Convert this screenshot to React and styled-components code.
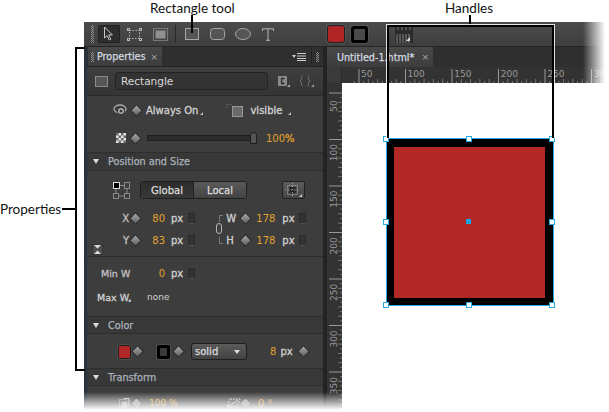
import React from 'react';
import styled, {createGlobalStyle} from 'styled-components';

const Global = createGlobalStyle`
html,body{margin:0;padding:0;background:#fff;}
*{box-sizing:border-box;}
`;

const UI = `"DejaVu Sans", sans-serif`;
const ORANGE = '#e3a22f';

const Page = styled.div`
position:relative;
width:609px;
height:412px;
overflow:hidden;
background:#fff;
padding:22px 0 0 84px;
`;

const Callout = styled.div`
position:absolute;
left:${p => p.$x}px;
top:${p => p.$y}px;
font:13.5px/16px "Lato", sans-serif;
color:#111;
white-space:nowrap;
z-index:5;
`;
const Leader = styled.div`
position:absolute;
left:${p => p.$x}px;
top:${p => p.$y}px;
width:${p => p.$w}px;
height:${p => p.$h}px;
background:#000;
z-index:5;
`;
const Bracket = styled.div`
position:absolute;
left:75px;
top:47px;
width:10px;
height:324px;
border:2px solid #000;
border-right:none;
z-index:5;
`;
const HandleFrame = styled.div`
position:absolute;
left:387px;
top:25px;
width:167px;
height:113px;
border:2px solid #000;
border-bottom:none;
outline:1px solid rgba(255,255,255,.85);
clip-path:inset(-1px -1px 0 -1px);
z-index:5;
`;

const Window = styled.div`
width:525px;
height:390px;
background:#3c3c3c;
display:flex;
flex-direction:column;
overflow:hidden;
font-family:${UI};
`;
const Toolbar = styled.div`
height:25px;
flex:none;
display:flex;
align-items:center;
padding-left:7px;
background:linear-gradient(#4b4b4b,#3f3f3f);
border-bottom:1px solid #252525;
`;
const Grip = styled.div`
width:${p => p.$w || 3}px;
height:${p => p.$h || 18}px;
margin-left:${p => p.$ml || 0}px;
margin-right:${p => p.$mr || 0}px;
flex:none;
background:repeating-conic-gradient(#8f8f8f 0 25%,transparent 0 50%) 0 0/2px 2px;
`;
const ToolButton = styled.div`
width:${p => p.$w}px;
height:${p => p.$h || 18}px;
margin-left:${p => p.$ml}px;
flex:none;
display:flex;
align-items:center;
justify-content:center;
border-radius:2px;
background:${p => (p.$active ? '#2d2d2d' : 'transparent')};
box-shadow:${p => (p.$active ? 'inset 0 0 0 1px #222' : 'none')};
`;
const ToolDivider = styled.div`
width:1px;
height:18px;
margin-left:${p => p.$ml}px;
background:#272727;
flex:none;
`;
const ColorChip = styled.div`
width:${p => p.$size}px;
height:${p => p.$size}px;
margin-left:${p => p.$ml}px;
flex:none;
border-radius:3px;
background:${p => (p.$stroke ? '#4a4a4a' : '#b12727')};
border:${p => (p.$stroke ? `${p.$stroke}px solid #000` : '1px solid #1f1f1f')};
box-shadow:0 0 0 1px rgba(255,255,255,.08);
`;

const Body = styled.div`
flex:1;
min-height:0;
display:flex;
`;
const Rail = styled.div`
width:3px;
flex:none;
background:#2a3240;
`;
const Panel = styled.div`
width:236px;
flex:none;
display:flex;
flex-direction:column;
background:#3d3d3d;
`;
const Sash = styled.div`
width:4px;
flex:none;
background:#232323;
`;
const TabBar = styled.div`
height:20px;
flex:none;
display:flex;
align-items:stretch;
background:#2f2f2f;
border-bottom:1px solid #242424;
`;
const PanelTab = styled.div`
display:flex;
align-items:center;
flex:none;
width:${p => p.$w}px;
margin-left:${p => p.$ml || 0}px;
padding-left:${p => p.$pl}px;
font-size:9.6px;
color:#d3dae0;
-webkit-text-stroke:.25px;
background:linear-gradient(#484848,#3d3d3d);
white-space:nowrap;
`;
const TabClose = styled.span`
margin-left:auto;
margin-right:4px;
font-size:9px;
color:#aaa;
-webkit-text-stroke:0;
`;
const MenuSpot = styled.div`
margin-left:auto;
display:flex;
align-items:center;
`;
const MenuSplit = styled.div`
width:1px;
height:100%;
margin:0 4px 0 5px;
background:#242424;
`;
const NameRow = styled.div`
height:29px;
flex:none;
display:flex;
align-items:center;
padding-left:8px;
background:linear-gradient(#3f3f3f,#343434);
border-bottom:1px solid #2a2a2a;
`;
const Swatch = styled.div`
width:13px;
height:11px;
flex:none;
background:#575757;
border:1px solid #8a8a8a;
`;
const NameField = styled.div`
width:153px;
height:18px;
margin-left:7px;
flex:none;
display:flex;
align-items:center;
padding-left:5px;
border:1px solid #222;
border-radius:3px;
background:#333;
color:#d8d8d8;
font-size:10.5px;
`;
const Row = styled.div`
height:${p => p.$h}px;
flex:none;
display:flex;
align-items:center;
padding-top:${p => p.$pt || 0}px;
padding-left:${p => p.$pl || 0}px;
position:relative;
border-bottom:${p => (p.$line ? '1px solid #2e2e2e' : 'none')};
`;
const Section = styled.div`
height:${p => p.$h}px;
flex:none;
display:flex;
align-items:center;
padding-left:6px;
font-size:9.7px;
color:#aab2bc;
-webkit-text-stroke:.25px;
background:#383838;
border-top:1px solid #2d2d2d;
border-bottom:1px solid #2d2d2d;
`;
const Triangle = styled.span`
width:0;
height:0;
margin-right:9px;
border-left:3.5px solid transparent;
border-right:3.5px solid transparent;
border-top:5px solid #ddd;
`;
const Text = styled.span`
flex:none;
width:${p => (p.$w ? `${p.$w}px` : 'auto')};
margin-left:${p => p.$ml || 0}px;
text-align:${p => p.$align || 'left'};
font-size:${p => p.$fs || 10}px;
-webkit-text-stroke:${p => (p.$strong ? '.3px' : '0')};
color:${p => p.$color || '#d2d2d2'};
white-space:nowrap;
`;
const Diamond = styled.span`
width:7px;
height:7px;
flex:none;
margin-left:${p => p.$ml || 0}px;
margin-right:${p => p.$mr || 0}px;
transform:rotate(45deg);
background:linear-gradient(135deg,#a8a8a8,#5e5e5e);
box-shadow:0 0 0 1px #2a2a2a;
`;
const Corner = styled.span`
width:0;
height:0;
flex:none;
align-self:center;
margin-left:${p => p.$ml || 0}px;
margin-top:6px;
border-left:3px solid transparent;
border-bottom:3px solid #bbb;
`;
const Toggle = styled.span`
width:7px;
height:11px;
flex:none;
margin-left:${p => p.$ml}px;
background:#333;
border:1px solid #2a2a2a;
border-bottom-color:#4e4e4e;
`;
const Track = styled.div`
position:relative;
width:109px;
height:6px;
margin-left:8px;
flex:none;
background:#2c2c2c;
border:1px solid #1e1e1e;
`;
const Thumb = styled.div`
position:absolute;
right:-2px;
top:-4px;
width:7px;
height:12px;
border-radius:3px 3px 1px 1px;
background:#555;
border:1px solid #1c1c1c;
`;
const Segmented = styled.div`
display:flex;
flex:none;
width:107px;
height:18px;
margin-left:10px;
border:1px solid #1f1f1f;
border-radius:3px;
overflow:hidden;
`;
const Segment = styled.div`
flex:1;
display:flex;
align-items:center;
justify-content:center;
font-size:10px;
-webkit-text-stroke:.25px;
color:#ddd;
background:${p => (p.$on ? 'linear-gradient(#2d2d2d,#383838)' : 'linear-gradient(#5a5a5a,#434343)')};
border-right:${p => (p.$on ? '1px solid #1f1f1f' : 'none')};
`;
const SmallButton = styled.div`
width:23px;
height:18px;
margin-left:35px;
flex:none;
display:flex;
align-items:center;
justify-content:center;
border:1px solid #222;
border-radius:2px;
background:linear-gradient(#5b5b5b,#444);
`;
const LinkBracket = styled.span`
width:4px;
height:7px;
flex:none;
margin-left:${p => p.$ml}px;
border-left:1px solid #777;
border-top:${p => (p.$top ? '1px solid #777' : 'none')};
border-bottom:${p => (p.$top ? 'none' : '1px solid #777')};
`;
const LinkIcon = styled.div`
position:absolute;
left:129px;
top:-6px;
width:6px;
height:11px;
background:#3d3d3d;
border:1.5px solid #b5b5b5;
border-radius:3px;
z-index:1;
`;
const Collapser = styled.div`
position:absolute;
left:5px;
bottom:1px;
width:11px;
height:11px;
display:flex;
align-items:center;
justify-content:center;
background:#4e4e4e;
border:1px solid #333;
`;
const SelectBox = styled.div`
width:56px;
height:17px;
margin-left:9px;
padding:0 6px 0 3px;
flex:none;
display:flex;
align-items:center;
justify-content:space-between;
font-size:10px;
-webkit-text-stroke:.25px;
color:#ddd;
border:1px solid #1e1e1e;
border-radius:3px;
background:linear-gradient(#5a5a5a,#434343);
`;
const SelectArrow = styled.span`
border-left:3px solid transparent;
border-right:3px solid transparent;
border-top:4px solid #ddd;
`;

const Doc = styled.div`
flex:1;
min-width:0;
display:flex;
flex-direction:column;
`;
const DocTabs = styled.div`
height:20px;
flex:none;
display:flex;
background:#2f2f2f;
`;
const HRulerBar = styled.div`
height:16px;
flex:none;
display:flex;
background:#333;
`;
const RulerCorner = styled.div`
width:15px;
flex:none;
background:#3a3a3a;
border-right:1px solid #2a2a2a;
`;
const CanvasArea = styled.div`
flex:1;
min-height:0;
display:flex;
background:#fff;
`;
const Canvas = styled.div`
flex:1;
background:#fff;
padding:56px 0 0 45px;
`;
const ShapeBox = styled.div`
position:relative;
width:166px;
height:166px;
background:#b22827;
border:solid #000;
border-width:8px 8px 7px 7px;
outline:1px solid #29abe2;
`;
const Handle = styled.div`
position:absolute;
left:${p => p.$x}px;
top:${p => p.$y}px;
width:6px;
height:6px;
background:#fff;
border:1px solid #29abe2;
`;
const CenterDot = styled.div`
position:absolute;
left:72px;
top:72px;
width:5px;
height:5px;
background:#14a5e6;
`;
const FadeBottom = styled.div`
position:absolute;
left:80px;
right:0;
top:392px;
height:20px;
background:linear-gradient(rgba(255,255,255,0),#fff 90%);
z-index:4;
`;
const FadeRight = styled.div`
position:absolute;
right:0;
top:22px;
width:26px;
height:62px;
background:linear-gradient(90deg,rgba(255,255,255,0),#fff 85%);
z-index:4;
`;
const LargeStrokeSwatch = styled.div`
width:13px;
height:14px;
margin-left:${p => p.$ml}px;
flex:none;
border-radius:2px;
background:${p => (p.$red ? '#b12727' : '#3a3a3a')};
border:${p => (p.$red ? '1px solid #1f1f1f' : '3px solid #000')};
box-shadow:0 0 0 1px rgba(255,255,255,.08);
`;

const HRuler = () => {
  const ticks = [];
  for (let i = 0; i < 60; i++) {
    const x = 17 + i * 4.65 - 4.65;
    const major = (i - 1) % 10 === 0;
    const mid = (i - 1) % 2 === 0;
    ticks.push(<line key={i} x1={x} x2={x} y1={major ? 2 : mid ? 12 : 14} y2={16} stroke={major ? '#999' : '#777'} strokeWidth="1" />);
  }
  return (
    <svg width="267" height="16">
      {ticks}
      {[50, 100, 150, 200, 250, 300].map((n, i) => (
        <text key={n} x={19 + i * 46.6} y="10" fontFamily="DejaVu Sans" fontSize="9" fill="#9a9a9a">{n}</text>
      ))}
    </svg>
  );
};

const VRuler = () => {
  const ticks = [];
  for (let i = 0; i < 70; i++) {
    const y = 10 + i * 4.65;
    const major = i % 10 === 0;
    const mid = i % 2 === 0;
    ticks.push(<line key={i} y1={y} y2={y} x1={major ? 2 : mid ? 11 : 13} x2={15} stroke={major ? '#999' : '#777'} strokeWidth="1" />);
  }
  return (
    <svg width="15" height="330" style={{flex: 'none', background: '#333'}}>
      {ticks}
      {[50, 100, 150, 200, 250, 300, 350].map((n, i) => (
        <text key={n} transform={`translate(10 ${23 + i * 46.6}) rotate(-90)`} fontFamily="DejaVu Sans" fontSize="9" textAnchor="middle" fill="#9a9a9a">{n}</text>
      ))}
    </svg>
  );
};

const ArrowIcon = () => (
  <svg width="14" height="16" viewBox="0 0 14 16">
    <path d="M2.5 1v11l2.7-2.4 2 4.4 1.6-.8-2-4.3h3.6z" fill="none" stroke="#c8c8c8" />
  </svg>
);
const MarqueeIcon = () => (
  <svg width="15" height="13" viewBox="0 0 15 13" fill="none" stroke="#b5b5b5">
    <rect x="2.5" y="2.5" width="10" height="8" strokeDasharray="1.5 1.5" />
    <rect x="0.5" y="0.5" width="2" height="2" />
    <rect x="12.5" y="0.5" width="2" height="2" />
    <rect x="0.5" y="10.5" width="2" height="2" />
    <rect x="12.5" y="10.5" width="2" height="2" />
  </svg>
);
const SliceIcon = () => (
  <svg width="15" height="13" viewBox="0 0 15 13">
    <rect x="0.5" y="0.5" width="14" height="12" fill="none" stroke="#aaa" strokeDasharray="1 1" />
    <rect x="2.5" y="2.5" width="10" height="8" fill="#8f8f8f" />
  </svg>
);
const RectIcon = () => (
  <svg width="14" height="12"><rect x="0.5" y="0.5" width="13" height="11" fill="#555" stroke="#a5a5a5" /></svg>
);
const RoundIcon = () => (
  <svg width="15" height="12"><rect x="0.5" y="0.5" width="14" height="11" rx="3" fill="#555" stroke="#a5a5a5" /></svg>
);
const EllipseIcon = () => (
  <svg width="16" height="12"><ellipse cx="8" cy="6" rx="7.5" ry="5.5" fill="#555" stroke="#a5a5a5" /></svg>
);
const TIcon = () => (
  <svg width="12" height="13" viewBox="0 0 12 13" fill="none" stroke="#b5b5b5">
    <path d="M.5 3V.8h11V3M6 .8v11.4M4 12.3h4" />
  </svg>
);
const RulerIcon = () => (
  <svg width="18" height="17" viewBox="0 0 18 17">
    <rect width="18" height="17" fill="#2b2b2b" />
    {[2, 5, 8, 11, 14].map(x => <line key={x} x1={x} x2={x} y1="8" y2="17" stroke="#888" />)}
    {[3, 7, 11, 15].map(x => <line key={x} x1={x} x2={x} y1="1" y2="4" stroke="#777" />)}
    <path d="M11 15l4-4v4z" fill="#ddd" />
  </svg>
);
const MenuIcon = () => (
  <svg width="14" height="8" viewBox="0 0 14 8" fill="#ccc">
    <path d="M0 2h4L2 5z" />
    <rect x="5" y="0" width="9" height="1" />
    <rect x="5" y="2.5" width="9" height="1" />
    <rect x="5" y="5" width="9" height="1" />
    <rect x="5" y="7" width="9" height="1" />
  </svg>
);
const ClassIcon = () => (
  <svg width="12" height="12" viewBox="0 0 12 12" style={{marginLeft: 10, flex: 'none'}}>
    <rect x="0" y="1" width="9" height="10" rx="1" fill="#8b8b8b" />
    <path d="M6.5 3.5H3.6v5h2.9" fill="none" stroke="#2c2c2c" strokeWidth="1.4" />
    <path d="M12 9v3H9z" fill="#aaa" />
  </svg>
);
const BracesIcon = () => (
  <svg width="15" height="12" viewBox="0 0 15 12" fill="none" stroke="#6e6e6e" style={{marginLeft: 9, flex: 'none'}}>
    <path d="M3.5 .5C2 .5 3 5.5 1 6c2 .5 1 5.5 2.5 5.5M8.5 .5c1.500 0 .5 5 2.500 5.500-2 .5-1 5.500-2.500 5.500" />
    <path d="M15 9v3h-3z" fill="#999" stroke="none" />
  </svg>
);
const EyeIcon = () => (
  <svg width="14" height="12" viewBox="0 0 14 12" style={{flex: 'none'}}>
    <ellipse cx="7" cy="5" rx="6" ry="4" fill="none" stroke="#aaa" strokeWidth="1.3" />
    <circle cx="8" cy="7" r="3.5" fill="#bbb" stroke="#2a2a2a" />
    <circle cx="8" cy="7" r="1.500" fill="#333" />
  </svg>
);
const VisibleIcon = () => (
  <svg width="17" height="13" viewBox="0 0 17 13" style={{marginLeft: 23, flex: 'none'}}>
    <path d="M.5 4V.5h6" fill="none" stroke="#666" strokeDasharray="1 1" />
    <rect x="6.500" y="2.500" width="10" height="10" fill="#6a6a6a" stroke="#999" />
  </svg>
);
const CheckerIcon = () => (
  <svg width="10" height="10" viewBox="0 0 10 10" style={{marginLeft: 3, marginRight: 6, flex: 'none'}}>
    <rect width="10" height="10" fill="#e4e4e4" />
    <path d="M0 0h2.500v2.500H0zM5 0h2.500v2.500H5zM2.500 2.500H5V5H2.500zM7.500 2.500H10V5H7.500zM0 5h2.500v2.500H0zM5 5h2.500v2.500H5zM2.500 7.500H5V10H2.500zM7.500 7.500H10V10H7.500z" fill="#6b6b6b" />
  </svg>
);
const AnchorIcon = () => (
  <svg width="17" height="17" viewBox="0 0 17 17" fill="none" stroke="#8a8a8a" style={{flex: 'none'}}>
    <rect x="0.5" y="0.5" width="6" height="6" fill="#000" stroke="#ddd" />
    <rect x="11.5" y="0.5" width="5" height="6" />
    <rect x="0.5" y="11.5" width="5" height="5" />
    <rect x="11.5" y="11.5" width="5" height="5" />
    <path d="M7 3.500h4M3 7v4M14 7v4M6 14h5" />
  </svg>
);
const AlignIcon = () => (
  <svg width="17" height="14" viewBox="0 0 17 14" fill="none" style={{flex: 'none'}}>
    <rect x="2.500" y="2.500" width="10" height="9" stroke="#aaa" strokeDasharray="1 1" />
    <rect x="4.500" y="4" width="6" height="6" fill="#222" />
    <path d="M7.500 0v14M0 7h15" stroke="#aaa" strokeDasharray="1 2" />
    <path d="M17 11v3h-3z" fill="#ccc" />
  </svg>
);
const HourglassIcon = () => (
  <svg width="7" height="9" viewBox="0 0 7 9" fill="#ddd">
    <path d="M0 0h7L3.500 3.500zM0 9h7L3.500 5.500z" />
  </svg>
);
const TransformIcon = () => (
  <svg width="13" height="11" viewBox="0 0 13 11" fill="none" stroke="#c9c9c9">
    <rect x="1.500" y="1.500" width="7" height="7" strokeDasharray="1 1" />
    <rect x="3.500" y="3.500" width="6" height="6" fill="#9a9a9a" stroke="none" />
    <path d="M11 8V.5H6" />
  </svg>
);
const SkewIcon = () => (
  <svg width="15" height="11" viewBox="0 0 15 11" fill="none" stroke="#bbb" style={{marginLeft: 50, flex: 'none'}}>
    <path d="M4 1h10l-3 8H1z" strokeDasharray="2 1" />
    <path d="M2 9L12 2" />
  </svg>
);

const handles = [0, 83, 166].flatMap(y => [0, 83, 166].map(x => ({x, y}))).filter(h => !(h.x === 83 && h.y === 83));

const App = () => {
  return (
    <Page>
      <Global />
      <Callout $x={150} $y={0}>Rectangle tool</Callout>
      <Leader $x={191} $y={15} $w={2} $h={18} />
      <Callout $x={445} $y={0}>Handles</Callout>
      <Leader $x={469} $y={15} $w={2} $h={11} />
      <HandleFrame />
      <Callout $x={0} $y={201}>Properties</Callout>
      <Leader $x={62} $y={208} $w={14} $h={2} />
      <Bracket />
      <Window>
        <Toolbar>
          <Grip />
          <ToolButton $active $w={22} $ml={4}><ArrowIcon /></ToolButton>
          <ToolButton $w={15} $ml={7}><MarqueeIcon /></ToolButton>
          <ToolButton $w={15} $ml={11}><SliceIcon /></ToolButton>
          <ToolDivider $ml={7} />
          <ToolButton $w={14} $ml={9}><RectIcon /></ToolButton>
          <ToolButton $w={15} $ml={11}><RoundIcon /></ToolButton>
          <ToolButton $w={16} $ml={10}><EllipseIcon /></ToolButton>
          <ToolButton $w={12} $ml={11}><TIcon /></ToolButton>
          <ColorChip $size={18} $ml={53} />
          <ColorChip $size={17} $stroke={3} $ml={6} />
          <ToolButton $w={18} $ml={27}><RulerIcon /></ToolButton>
        </Toolbar>
        <Body>
          <Rail />
          <Panel>
            <TabBar>
              <PanelTab $w={74} $ml={1} $pl={3}>
                <Grip $h={10} $mr={3} />
                Properties
                <TabClose>×</TabClose>
              </PanelTab>
              <MenuSpot>
                <MenuIcon />
                <MenuSplit />
                <Grip $h={10} $mr={4} />
              </MenuSpot>
            </TabBar>
            <NameRow>
              <Swatch />
              <NameField>Rectangle</NameField>
              <ClassIcon />
              <BracesIcon />
            </NameRow>
            <Row $h={28} $pl={26}>
              <EyeIcon />
              <Diamond $ml={6} />
              <Text $ml={6} $strong>Always On</Text>
              <Corner $ml={2} />
              <VisibleIcon />
              <Text $ml={7} $strong>visible</Text>
              <Corner $ml={6} />
            </Row>
            <Row $h={28} $pl={26}>
              <CheckerIcon />
              <Diamond />
              <Track><Thumb /></Track>
              <Text $ml={10} $color={ORANGE}>100</Text>
              <Text $color={ORANGE} $strong>%</Text>
            </Row>
            <Section $h={19}><Triangle />Position and Size</Section>
            <Row $h={36} $pl={26} $pt={2}>
              <AnchorIcon />
              <Segmented>
                <Segment $on>Global</Segment>
                <Segment>Local</Segment>
              </Segmented>
              <SmallButton><AlignIcon /></SmallButton>
            </Row>
            <Row $h={22} $pl={35}>
              <Text $w={7} $align="right" $strong $color="#c2c2c2">X</Text>
              <Diamond $ml={3} />
              <Text $w={26} $align="right" $color={ORANGE}>80</Text>
              <Text $ml={6} $strong>px</Text>
              <Toggle $ml={5} />
              <LinkBracket $top $ml={24} />
              <Text $w={10} $ml={3} $strong>W</Text>
              <Diamond $ml={6} />
              <Text $ml={7} $color={ORANGE}>178</Text>
              <Text $ml={7} $strong>px</Text>
              <Toggle $ml={4} />
            </Row>
            <Row $h={22} $pl={35}>
              <LinkIcon />
              <Text $w={7} $align="right" $strong $color="#c2c2c2">Y</Text>
              <Diamond $ml={3} />
              <Text $w={26} $align="right" $color={ORANGE}>83</Text>
              <Text $ml={6} $strong>px</Text>
              <Toggle $ml={5} />
              <LinkBracket $ml={24} />
              <Text $w={10} $ml={3} $strong>H</Text>
              <Diamond $ml={6} />
              <Text $ml={7} $color={ORANGE}>178</Text>
              <Text $ml={7} $strong>px</Text>
              <Toggle $ml={4} />
            </Row>
            <Row $h={6} $line><Collapser><HourglassIcon /></Collapser></Row>
            <Row $h={28} $pl={14} $pt={5}>
              <Text $strong $color="#c2c2c2" $w={28} $fs={9.5}>Min W</Text>
              <Text $w={36} $align="right" $color={ORANGE}>0</Text>
              <Text $ml={6} $strong>px</Text>
              <Toggle $ml={5} />
            </Row>
            <Row $h={24} $pl={10}>
              <Text $strong $w={31} $fs={9.5}>Max W.</Text>
              <Corner />
              <Text $ml={16} $fs={9}>none</Text>
            </Row>
            <Row $h={7} />
            <Section $h={18}><Triangle />Color</Section>
            <Row $h={34} $pl={31} $pt={1}>
              <LargeStrokeSwatch $red $ml={0} />
              <Diamond $ml={3} />
              <LargeStrokeSwatch $ml={16} />
              <Diamond $ml={5} />
              <SelectBox>solid<SelectArrow /></SelectBox>
              <Text $ml={23} $color={ORANGE}>8</Text>
              <Text $ml={4} $strong>px</Text>
              <Diamond $ml={7} />
            </Row>
            <Section $h={18}><Triangle />Transform</Section>
            <Row $h={34} $pl={31}>
              <TransformIcon />
              <Diamond $ml={2} />
              <Text $w={27} $ml={9} $fs={9} $color={ORANGE}>100 %</Text>
              <SkewIcon />
              <Diamond $ml={1} />
              <Text $ml={9} $color={ORANGE}>0 °</Text>
            </Row>
          </Panel>
          <Sash />
          <Doc>
            <DocTabs>
              <PanelTab $w={106} $pl={10}>Untitled-1.html*<TabClose>×</TabClose></PanelTab>
            </DocTabs>
            <HRulerBar>
              <RulerCorner />
              <HRuler />
            </HRulerBar>
            <CanvasArea>
              <VRuler />
              <Canvas>
                <ShapeBox>
                  <CenterDot />
                  {handles.map(h => <Handle key={`${h.x}-${h.y}`} $x={h.x - 11} $y={h.y - 11} />)}
                </ShapeBox>
              </Canvas>
            </CanvasArea>
          </Doc>
        </Body>
      </Window>
      <FadeBottom />
      <FadeRight />
    </Page>
  );
};

export default App;
